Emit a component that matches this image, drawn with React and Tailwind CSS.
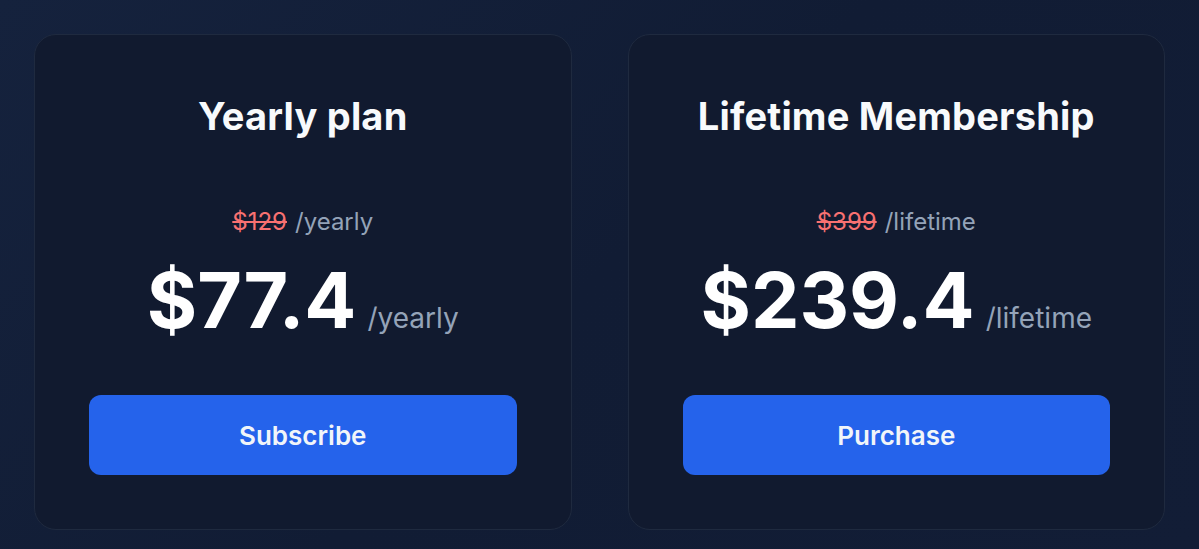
import React from "react";

function Card({ title, oldPrice, price, period, cta }) {
  return (
    <div className="flex-1 flex flex-col items-center rounded-[22px] border border-[#1f2a3f] bg-[#111a2f] px-[54px] pt-[61px] pb-[54px]">
      <h2 className="h-[40px] text-[38px] leading-[40px] font-bold tracking-[0.2px] text-[#f8fafc] whitespace-nowrap">{title}</h2>
      <div className="mt-[70px] flex h-[32px] items-baseline gap-[8px] text-[24px] leading-[32px]">
        <span className="text-[#f87171] line-through decoration-[2px]">{oldPrice}</span>
        <span className="text-[#94a3b8]">{period}</span>
      </div>
      <div className="mt-[24px] flex h-[76px] items-baseline gap-[11px]">
        <span className="text-[77px] leading-[76px] font-bold text-white">{price}</span>
        <span className="text-[28px] leading-[32px] text-[#94a3b8]">{period}</span>
      </div>
      <button className="mt-[57px] flex h-[81px] w-full items-center justify-center rounded-[12px] bg-[#2563eb] text-[26px] font-semibold text-[#f1f5f9]">
        {cta}
      </button>
    </div>
  );
}

export default function App() {
  return (
    <div
      className="flex h-[549px] w-full gap-[56px] bg-[linear-gradient(135deg,#15223d_0%,#111c34_50%,#121d36_100%)] px-[34px] pt-[34px] pb-[19px]"
      style={{ fontFamily: "Inter, 'Noto Sans', sans-serif" }}
    >
      <Card title="Yearly plan" oldPrice="$129" price="$77.4" period="/yearly" cta="Subscribe" />
      <Card title="Lifetime Membership" oldPrice="$399" price="$239.4" period="/lifetime" cta="Purchase" />
    </div>
  );
}
